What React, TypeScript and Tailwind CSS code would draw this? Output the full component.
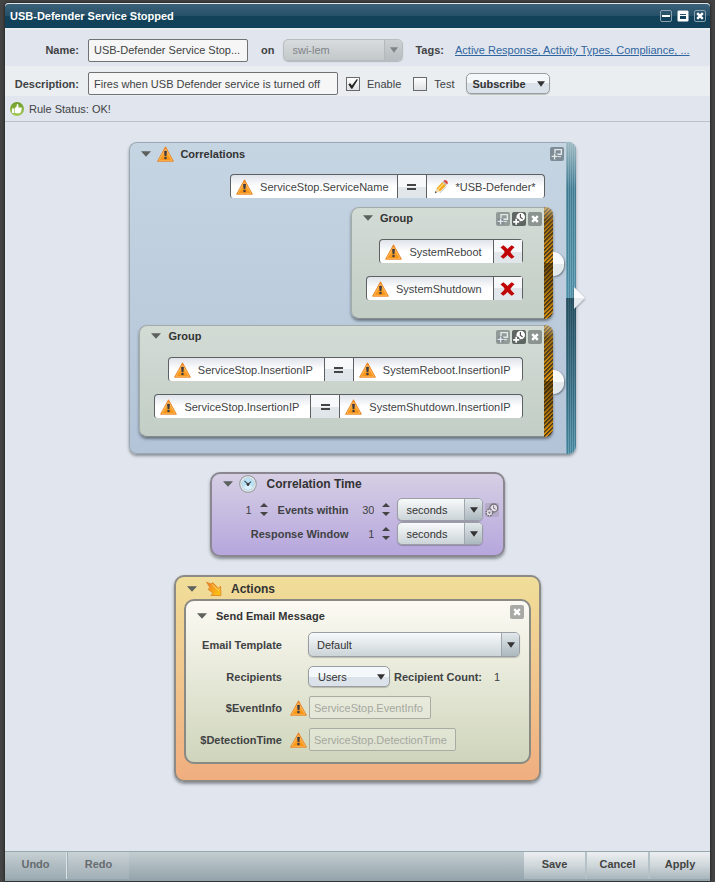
import React, { useState } from "react";
import clsx from "clsx";

const tagList = "Active Response, Activity Types, Compliance, ...";

const WarningIcon = () => (
	<svg width="17" height="16" viewBox="0 0 17 16" className="shrink-0">
		<defs>
			<linearGradient id="warn" x1="0" y1="0" x2="0" y2="1">
				<stop offset="0" stopColor="#f07a1c" />
				<stop offset="0.55" stopColor="#fba32c" />
				<stop offset="1" stopColor="#f98a08" />
			</linearGradient>
		</defs>
		<path d="M8.5 0.8 L16.4 15.2 H0.6 Z" fill="url(#warn)" stroke="#e8862a" strokeWidth="0.9" strokeLinejoin="round" />
		<path d="M8.5 3 L14.9 14.3 H2.1 Z" fill="none" stroke="#ffc56b" strokeWidth="0.7" />
		<path d="M7.1 5 H9.9 L9.4 10.2 H7.6 Z" fill="#3c3c44" />
		<rect x="7.4" y="11" width="2.2" height="2.2" fill="#3c3c44" />
	</svg>
);

const Caret = () => (
	<svg width="10" height="6" viewBox="0 0 10 6">
		<path d="M0 0.3 H10 L5 5.7 Z" fill="#5c615e" />
	</svg>
);

const PencilIcon = () => (
	<svg width="17" height="14" viewBox="-2 0 17 14" className="shrink-0">
		<path d="M1 13 L2.6 8.2 L5.6 11.4 Z" fill="#f3d9a8" />
		<path d="M0.8 13.2 L1.6 11 L2.9 12.4 Z" fill="#444" />
		<path d="M2.6 8.2 L8.4 1.9 L12 5.4 L5.9 11.6 Z" fill="#f5a81c" />
		<path d="M3.5 9 L9.4 2.8 L10.4 3.8 L4.4 10 Z" fill="#ffd873" />
		<path d="M8.4 1.9 L9.5 0.9 L13.1 4.3 L12 5.4 Z" fill="#b9bcc0" />
		<path d="M9.5 0.9 L10.5 0.1 Q13.9 0.3 13.9 3.4 L13.1 4.3 Z" fill="#d9443c" />
		<path d="M5.8 12.9 L12 6.6" stroke="#b8b8b8" strokeWidth="1" />
	</svg>
);

const RedCross = () => (
	<svg width="15" height="14" viewBox="0 0 14 14">
		<path
			d="M0 2.4 L2.8 0.2 Q5.2 1.6 7 4 Q9 1.6 11.2 0.2 L14 2.3 Q11.4 4.4 9.8 7 Q11.4 9.6 14 11.7 L11.2 13.8 Q9 12.4 7 10 Q5 12.4 2.8 13.8 L0 11.6 Q2.8 9.6 4.2 7 Q2.8 4.4 0 2.4 Z"
			fill="#c00606"
		/>
	</svg>
);

const EqualSign = () => (
	<svg width="9" height="6" viewBox="0 0 9 6">
		<path d="M0 0 H9 V2 H0 Z M0 4 H9 V6 H0 Z" fill="#444" />
	</svg>
);

const ThumbIcon = () => (
	<svg width="14" height="14" viewBox="0 0 14 14">
		<defs>
			<linearGradient id="thumb" x1="0" y1="0" x2="0" y2="1">
				<stop offset="0" stopColor="#6d9c28" />
				<stop offset="1" stopColor="#a3cb5a" />
			</linearGradient>
		</defs>
		<circle cx="7" cy="7" r="7" fill="url(#thumb)" />
		<path
			d="M2 6.4 H4.2 V11 H2 Z M4.8 6.3 L6.6 4.6 L6.9 2 Q8.6 1.8 8.5 4 L8.2 5.4 H11.3 Q12.4 6.2 11.5 7.2 Q12 8.2 11.1 8.8 Q11.4 9.8 10.5 10.2 Q10.5 11.2 9.4 11.3 H6.2 L4.8 10.7 Z"
			fill="#fff"
		/>
	</svg>
);

const ClockIcon = () => (
	<svg width="18" height="18" viewBox="0 0 18 18">
		<circle cx="9" cy="9" r="8.3" fill="#f4f6f7" stroke="#9a9fa3" strokeWidth="1.2" />
		<circle cx="9" cy="9" r="6.4" fill="#b9e2f6" stroke="#c0ccd2" strokeWidth="0.8" />
		<path d="M4.4 12.6 Q9 16.6 13.6 12.6 Q12 9.8 9 9.4 Q6 9.8 4.4 12.6 Z" fill="#dcf1fb" />
		<path d="M5.5 5.9 L9 9.2 L12 6.6" fill="none" stroke="#3f4a50" strokeWidth="1.2" />
		<circle cx="9" cy="9.5" r="1.4" fill="#333" />
	</svg>
);

const ActionIcon = () => (
	<svg width="16" height="16" viewBox="0 0 16 16">
		<defs>
			<linearGradient id="act" x1="0" y1="0" x2="1" y2="1">
				<stop offset="0" stopColor="#ee7c22" />
				<stop offset="1" stopColor="#ffcb12" />
			</linearGradient>
		</defs>
		<path
			d="M0.6 1.2 L5 3 L6.6 1.6 L12.4 7.2 L14.6 5.2 L15 14.6 L4.8 14.4 L7.2 12.2 L2.2 8.4 L3.8 6.4 Z"
			fill="url(#act)"
			stroke="#d98424"
			strokeWidth="0.8"
			strokeLinejoin="round"
		/>
		<path d="M5.8 3.4 L12.4 9.4 L13.8 8.2" fill="none" stroke="#ffdc84" strokeWidth="0.9" />
	</svg>
);

const AddGroupIcon = () => (
	<svg width="14" height="14" viewBox="0 0 14 14">
		<path d="M5 2.6 H11.4 V7.2 H5 Z" fill="none" stroke="#e4e8ea" strokeWidth="1.4" />
		<path d="M7.5 9.6 H11" stroke="#e4e8ea" strokeWidth="1" />
		<circle cx="4.6" cy="9.4" r="3.4" fill="#7d8a90" />
		<path d="M4.6 6.4 V12.4 M1.6 9.4 H7.6" stroke="#e4e8ea" strokeWidth="1.4" />
	</svg>
);

const AddTimeIcon = () => (
	<svg width="14" height="14" viewBox="0 0 14 14">
		<circle cx="8.7" cy="5" r="4.3" fill="#fff" />
		<path d="M8.4 2 V5.2 L10.6 7" fill="none" stroke="#555" strokeWidth="1.2" />
		<circle cx="4.2" cy="9.8" r="3.6" fill="#5e6562" />
		<path d="M4.2 6.8 V12.8 M1.2 9.8 H7.2" stroke="#fff" strokeWidth="1.7" />
	</svg>
);

const SmallX = () => (
	<svg width="14" height="14" viewBox="0 0 14 14">
		<path d="M4.2 4.2 L9.8 9.8 M9.8 4.2 L4.2 9.8" stroke="#fff" strokeWidth="2.4" />
	</svg>
);

const GearClockIcon = () => (
	<svg width="14" height="14" viewBox="0 0 14 14">
		<circle cx="8.8" cy="5" r="4" fill="#e6e2ea" stroke="#77717c" strokeWidth="1.3" />
		<path d="M8.6 2.6 V5.4 L10.6 6.2" fill="none" stroke="#77717c" strokeWidth="1" />
		<circle cx="4.4" cy="9.6" r="3.3" fill="#e6e2ea" stroke="#77717c" strokeWidth="1.5" strokeDasharray="1.8 0.8" />
		<circle cx="4.4" cy="9.6" r="1.1" fill="#77717c" />
	</svg>
);

const IconButton = ({ label, className, children }: { label: string; className: string; children: React.ReactNode }) => (
	<button aria-label={label} className={clsx("flex items-center justify-center rounded-xs", className)}>
		{children}
	</button>
);

const Term = ({ text, icon, compact }: { text: string; icon?: React.ReactNode; compact?: boolean }) => (
	<span className={clsx("flex items-center gap-[7px] pl-[5px]", compact ? "pr-2" : "pr-[11px]")}>
		{icon ?? <WarningIcon />}
		{text}
	</span>
);

type ConditionProps = {
	left: string;
	right?: string;
	icon?: React.ReactNode;
	compact?: boolean;
};

const Condition = ({ left, right, icon, compact }: ConditionProps) => (
	<div className="flex h-6 w-fit rounded-t-[4px] rounded-b-[3px] border-x border-t border-[#5c6063] bg-linear-to-b from-[#dfe3ea] to-white to-50%">
		<Term text={left} compact={compact} />
		<button
			aria-label={right ? "Equals" : "Remove condition"}
			className={clsx(
				"flex items-center justify-center border-l border-[#5c6063] bg-linear-to-b from-[#f6f8f9] from-50% to-[#e1e6ea] to-50%",
				right ? "w-[30px] border-r" : "w-[29px]"
			)}
		>
			{right ? <EqualSign /> : <RedCross />}
		</button>
		{right && <Term text={right} icon={icon} compact={compact} />}
	</div>
);

const Group = ({ children }: { children: React.ReactNode }) => (
	<section className="relative flex w-fit rounded-lg shadow-[0_2px_3px_rgba(50,60,70,0.6)]">
		<div className="rounded-l-lg border border-r-0 border-[#a3aba9] border-b-[#858b89] bg-linear-to-b from-[#d3dbd5] to-[#c2cec6] pb-[18px]">
			<header className="flex h-[31px] items-start pt-[2px] pr-[2px] pl-[11px]">
				<button className="flex h-4 items-center gap-[7px] font-bold text-[#333]">
					<Caret />
					Group
				</button>
				<div className="ml-auto flex gap-[2px] pt-[2px]">
					<IconButton label="Add group" className="bg-[#929b97]"><AddGroupIcon /></IconButton>
					<IconButton label="Set group time" className="bg-[#5e6562]"><AddTimeIcon /></IconButton>
					<IconButton label="Remove group" className="bg-[#8b9490]"><SmallX /></IconButton>
				</div>
			</header>
			<div className="flex flex-col items-end gap-[13px] pr-[21px] pl-[14px]">{children}</div>
		</div>
		<div className="w-[9px] overflow-hidden rounded-r-lg bg-[repeating-linear-gradient(135deg,#4e3c1c_0px,#4e3c1c_1px,#d8900c_2px,#d8900c_3px)]">
			<div className="h-1/2 bg-linear-to-b from-[#c8c4b8]/60 via-[#5a4218]/40 via-25% to-[#8a6a20]/0" />
			<div className="h-1/2 bg-linear-to-b from-[#3a2600]/60 to-[#3a2600]/0" />
		</div>
		<div className="absolute top-[45px] left-full h-6 w-[11px] rounded-r-full bg-linear-to-b from-[#f7f9fa] from-50% to-[#e4e9ec] to-50% shadow-[1px_1px_2px_rgba(50,60,70,0.6)]" />
	</section>
);

const DropDown = ({
	label,
	options,
	className,
	boxed = true,
	disabled,
}: {
	label: string;
	options: string[];
	className: string;
	boxed?: boolean;
	disabled?: boolean;
}) => (
	<div className={clsx("relative", disabled ? "text-[#808488]" : "text-[#333]")}>
		<select
			aria-label={label}
			disabled={disabled}
			className={clsx(
				"block appearance-none rounded-[5px] border shadow-[0_1px_1px_rgba(0,0,0,0.2)] outline-none",
				disabled ? "border-[#b9bdc0] bg-linear-to-b from-[#d8dcdd] to-[#c3c8ca]" : "border-[#999ea2]",
				!disabled && boxed && "bg-linear-to-b from-[#f8fafb] to-[#ccd4d8]",
				!boxed && "bg-linear-to-b from-[#f5f8fa] from-50% to-[#dbe2ea] to-50%",
				className
			)}
		>
			{options.map((option) => (
				<option key={option}>{option}</option>
			))}
		</select>
		<span
			className={clsx(
				"pointer-events-none absolute inset-y-px right-px flex items-center justify-center rounded-r-[4px]",
				boxed ? "w-[18px] border-l" : "w-4",
				boxed && (disabled ? "border-[#b4b9bb] bg-linear-to-b from-[#ccd0d2] to-[#b7bdc0]" : "border-[#a0a8ac] bg-linear-to-b from-[#e2e8eb] to-[#abb8be]")
			)}
		>
			<svg width="8" height="6" viewBox="0 0 8 6">
				<path d="M0 0.3 H8 L4 5.7 Z" fill="currentColor" />
			</svg>
		</span>
	</div>
);

const Stepper = ({ label, initial }: { label: string; initial: number }) => {
	const [value, setValue] = useState(initial);

	return (
		<div className="flex items-center gap-2">
			<input
				type="number"
				aria-label={label}
				value={value}
				onChange={(e) => setValue(Number(e.target.value))}
				className="w-[22px] text-right [appearance:textfield] outline-none [&::-webkit-inner-spin-button]:appearance-none"
			/>
			<div className="flex flex-col gap-[5px]">
				<button aria-label={`Increase ${label}`} onClick={() => setValue(value + 1)}>
					<svg width="8" height="4" viewBox="0 0 8 4" className="block"><path d="M0 4 L4 0 L8 4 Z" fill="#444" /></svg>
				</button>
				<button aria-label={`Decrease ${label}`} onClick={() => setValue(value - 1)}>
					<svg width="8" height="4" viewBox="0 0 8 4" className="block"><path d="M0 0 H8 L4 4 Z" fill="#444" /></svg>
				</button>
			</div>
		</div>
	);
};

const CheckBox = ({ label, checked }: { label: string; checked?: boolean }) => (
	<label className="flex items-center gap-[7px]">
		<span className="relative size-[14px]">
			<input
				type="checkbox"
				defaultChecked={checked}
				className="peer block size-[14px] appearance-none border border-[#666a6d] bg-linear-to-b from-white to-[#dfe1e3]"
			/>
			<svg viewBox="0 0 14 14" className="pointer-events-none absolute inset-0 hidden peer-checked:block">
				<path d="M2.3 7.2 L4.2 6.2 L5.9 8.6 L10.6 2.3 L12 2.6 L6.3 11.8 L5.3 11.8 Z" fill="#222" />
			</svg>
		</span>
		{label}
	</label>
);

const TitleBar = () => (
	<header className="flex h-[27px] items-center justify-between rounded-t-sm border-t border-b-2 border-t-[#dfe6ea] border-b-[#e8edef] bg-linear-to-b from-[#3a6177] via-[#265069] via-50% to-[#12415a] to-50% pr-1 pl-[5px]">
		<h1 className="text-[11px] font-bold text-white">USB-Defender Service Stopped</h1>
		<div className="flex gap-[5px]">
			<IconButton label="Minimize" className="size-3 border border-[#8ba3b0]">
				<svg width="8" height="8" viewBox="0 0 8 8"><path d="M0 3 H8 V5 H0 Z" fill="#fff" /></svg>
			</IconButton>
			<IconButton label="Maximize" className="size-3 border border-[#8ba3b0]">
				<svg width="10" height="10" viewBox="0 0 10 10">
					<path d="M0 0 H10 V10 H0 Z M2 3 V4 H8 V3 Z M2 5 V8 H8 V5 Z" fill="#fff" fillRule="evenodd" />
				</svg>
			</IconButton>
			<IconButton label="Close" className="size-3 border border-[#8ba3b0]">
				<svg width="8" height="8" viewBox="0 0 8 8"><path d="M1.2 1.2 L6.8 6.8 M6.8 1.2 L1.2 6.8" stroke="#fff" strokeWidth="2.4" /></svg>
			</IconButton>
		</div>
	</header>
);

const RuleForm = () => (
	<div className="border-b border-[#bcc1c8]">
		<div className="flex h-9 items-center pt-1">
			<label htmlFor="name" className="w-[74px] text-right font-bold">Name:</label>
			<input
				id="name"
				defaultValue="USB-Defender Service Stop..."
				className="ml-[9px] h-[23px] w-40 rounded-[2px] border border-[#6e7275] bg-[#f6f6f6] px-[5px] outline-none"
			/>
			<span className="mr-[9px] ml-[13px] font-bold">on</span>
			<DropDown label="Manager" options={["swi-lem"]} disabled className="h-[22px] w-[120px] pl-2" />
			<span className="ml-3 font-bold">Tags:</span>
			<a href="#tags" className="ml-[11px] text-[#2f66a0] underline">{tagList}</a>
		</div>
		<div className="flex h-[30px] items-center bg-[#eaeef1] pt-[5px]">
			<label htmlFor="description" className="w-[74px] text-right font-bold">Description:</label>
			<input
				id="description"
				defaultValue="Fires when USB Defender service is turned off"
				className="ml-[9px] h-[23px] w-[250px] rounded-[2px] border border-[#6e7275] bg-[#f6f6f6] px-[5px] outline-none"
			/>
			<div className="ml-2 flex gap-3">
				<CheckBox label="Enable" checked />
				<CheckBox label="Test" />
				<DropDown label="Subscribe" options={["Subscribe"]} boxed={false} className="h-[21px] w-[84px] pl-[5px] font-bold" />
			</div>
		</div>
		<p className="flex h-[25px] items-center gap-[5px] pl-[5px]">
			<ThumbIcon />
			Rule Status: OK!
		</p>
	</div>
);

const Correlations = () => (
	<div className="relative pr-[10px]">
		<section className="flex rounded-lg shadow-[0_2px_3px_rgba(50,60,70,0.5)]">
			<div className="rounded-l-lg border border-r-0 border-[#9aa9b4] bg-linear-to-b from-[#c6d5e2] to-[#b3c4d8] pb-4">
				<header className="flex h-[31px] items-start pt-[2px] pr-[2px] pl-[11px]">
					<button className="flex h-[18px] items-center gap-[6px] font-bold text-[#333]">
						<Caret />
						<WarningIcon />
						Correlations
					</button>
					<IconButton label="Add group" className="mt-[2px] ml-auto bg-[#7d8c96]"><AddGroupIcon /></IconButton>
				</header>
				<div className="flex flex-col items-end pr-[13px] pl-[9px]">
					<div className="mr-2 mb-[9px]">
						<Condition left="ServiceStop.ServiceName" right="*USB-Defender*" icon={<PencilIcon />} compact />
					</div>
					<div className="mb-[6px]">
						<Group>
							<Condition left="SystemReboot" />
							<Condition left="SystemShutdown" />
						</Group>
					</div>
					<Group>
						<Condition left="ServiceStop.InsertionIP" right="SystemReboot.InsertionIP" />
						<Condition left="ServiceStop.InsertionIP" right="SystemShutdown.InsertionIP" />
					</Group>
				</div>
			</div>
			<div className="w-[10px] overflow-hidden rounded-r-lg bg-[repeating-linear-gradient(90deg,#6aa3b8_0px,#6aa3b8_1px,#3c7288_1px,#3c7288_2px)]">
				<div className="h-1/2 bg-linear-to-b from-[#b9cbd0]/80 via-[#4d8397]/30 via-30% to-[#6fb0c6]/40" />
				<div className="h-1/2 bg-linear-to-b from-[#12303e]/60 to-[#5fa3bb]/30" />
			</div>
		</section>
		<svg width="12" height="24" viewBox="0 0 12 24" className="absolute top-1/2 right-0 -translate-y-1/2 drop-shadow-[0_1px_1px_rgba(50,60,70,0.5)]">
			<path d="M0 1 L11 12 H0 Z" fill="#f9fbfc" />
			<path d="M0 12 H11 L0 23 Z" fill="#e6ebef" />
		</svg>
	</div>
);

const CorrelationTime = () => (
	<section className="mt-[18px] rounded-[10px] border-2 border-[#8a8790] bg-linear-to-b from-[#d6cfe4] to-[#b6a6dd] pt-px pr-1 pb-[10px] pl-[11px] shadow-[0_2px_3px_rgba(50,60,70,0.5)]">
		<button className="flex h-[18px] items-center gap-[6px] text-[12px] font-bold text-[#333]">
			<Caret />
			<ClockIcon />
			<span className="pl-1">Correlation Time</span>
		</button>
		<div className="mt-[5px] flex flex-col items-end gap-px pl-[7px]">
			<div className="flex items-center">
				<Stepper label="events" initial={1} />
				<b className="ml-[10px]">Events within</b>
				<div className="mr-[7px] ml-1"><Stepper label="time" initial={30} /></div>
				<DropDown label="Time unit" options={["seconds"]} className="h-[23px] w-[86px] pl-2" />
				<IconButton label="Advanced time" className="ml-[2px] bg-[#b5abc8]"><GearClockIcon /></IconButton>
			</div>
			<div className="flex items-center pr-4">
				<b>Response Window</b>
				<div className="mr-[7px] ml-1"><Stepper label="window" initial={1} /></div>
				<DropDown label="Window unit" options={["seconds"]} className="h-[23px] w-[86px] pl-2" />
			</div>
		</div>
	</section>
);

const eventFields = [
	{ id: "event-info", label: "$EventInfo", value: "ServiceStop.EventInfo", width: "w-[122px]" },
	{ id: "detection-time", label: "$DetectionTime", value: "ServiceStop.DetectionTime", width: "w-[147px]" },
];

const Actions = () => (
	<section className="mt-[18px] rounded-[10px] border-2 border-[#8d8b87] bg-linear-to-b from-[#f0de9a] to-[#f0ae7f] px-2 pb-4 shadow-[0_2px_3px_rgba(50,60,70,0.5)]">
		<button className="flex h-[22px] items-center gap-[9px] pt-[2px] pl-[3px] text-[12px] font-bold text-[#333]">
			<Caret />
			<ActionIcon />
			Actions
		</button>
		<div className="rounded-[10px] border-2 border-[#8a8a85] bg-linear-to-b from-[#fcfaf3] to-[#cfd5bb] pt-1 pr-[5px] pb-[11px] pl-[11px]">
			<header className="flex items-start justify-between">
				<button className="flex h-[22px] items-center gap-[9px] font-bold text-[#333]">
					<Caret />
					Send Email Message
				</button>
				<IconButton label="Remove action" className="bg-[#a9aaa6]"><SmallX /></IconButton>
			</header>
			<div className="mt-[5px] grid grid-cols-[85px_auto] items-center gap-x-[7px] gap-y-[9px] pr-1">
				<b className="text-right">Email Template</b>
				<div className="pl-[19px]">
					<DropDown label="Email Template" options={["Default"]} className="h-[25px] w-[212px] pl-2" />
				</div>
				<b className="text-right">Recipients</b>
				<div className="flex items-center gap-1 pl-[19px]">
					<DropDown label="Recipients" options={["Users"]} boxed={false} className="h-[21px] w-[82px] pl-[9px]" />
					<b>Recipient Count:</b>
					<span className="pl-2">1</span>
				</div>
				{eventFields.map((field) => (
					<React.Fragment key={field.id}>
						<label htmlFor={field.id} className="text-right font-bold">{field.label}</label>
						<div className="flex items-center gap-[2px] pl-px">
							<WarningIcon />
							<input
								id={field.id}
								defaultValue={field.value}
								disabled
								className={clsx("h-[23px] rounded-[2px] border border-[#aaaca4] bg-white/25 px-1 text-[#a5a8a0]", field.width)}
							/>
						</div>
					</React.Fragment>
				))}
			</div>
		</div>
	</section>
);

const Footer = () => (
	<footer className="flex h-[30px] border-t border-[#96a8ae] bg-linear-to-b from-[#c3cdd1] to-[#93a3ab] pb-[2px] font-bold">
		<button disabled className="w-[62px] border-r border-[#dce4e7] bg-white/5 pb-[3px] text-[#666c70]">Undo</button>
		<button disabled className="w-[62px] border-l border-[#a0aeb5] bg-white/10 pb-[3px] text-[#666c70]">Redo</button>
		<div className="ml-auto flex gap-[2px] bg-[#b4c2c8] text-[#444]">
			<button className="w-[61px] bg-linear-to-b from-[#eceff1] via-[#cfd7da] to-[#a8b6bc] pb-[3px]">Save</button>
			<button className="w-[61px] bg-linear-to-b from-[#eceff1] via-[#cfd7da] to-[#a8b6bc] pb-[3px]">Cancel</button>
			<button className="w-[60px] bg-linear-to-b from-[#eceff1] via-[#cfd7da] to-[#a8b6bc] pb-[3px]">Apply</button>
		</div>
	</footer>
);

const App = () => {
	return (
		<div className="flex min-h-screen flex-col bg-[#434343] px-[5px] pt-[3px] pb-px font-['Liberation_Sans',Arial,sans-serif] text-[11px] leading-[14px] text-[#404244]">
			<div className="flex flex-1 flex-col rounded-t-sm bg-[#e1e5ed] shadow-[0_0_3px_#111]">
				<TitleBar />
				<RuleForm />
				<main className="flex flex-1 flex-col items-center pt-5 pb-6">
					<Correlations />
					<CorrelationTime />
					<Actions />
				</main>
				<Footer />
			</div>
		</div>
	);
};

export default App;
